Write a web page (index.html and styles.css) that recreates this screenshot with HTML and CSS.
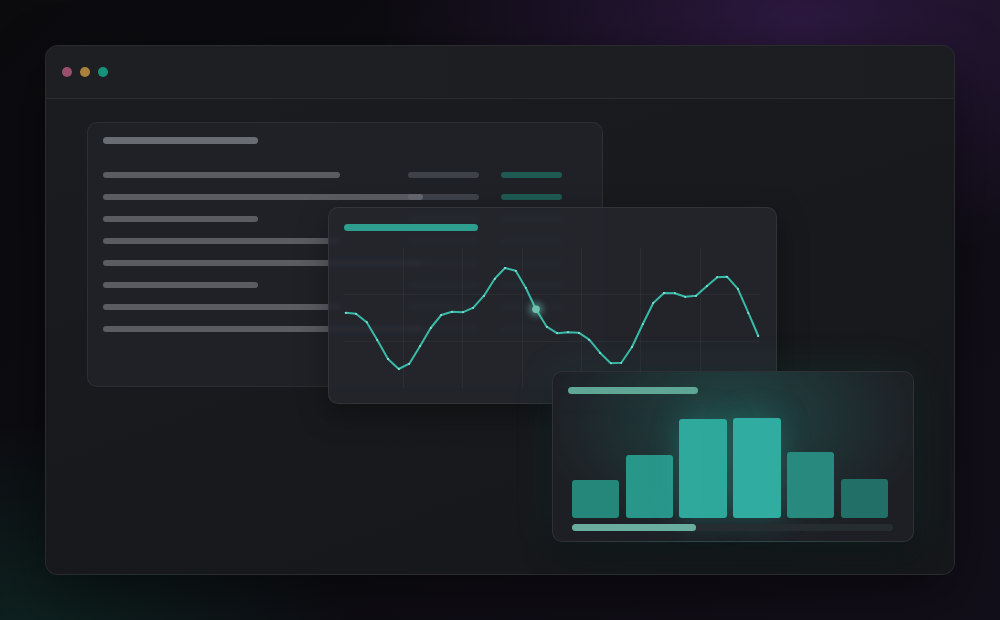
FILE: index.html
```html
<!DOCTYPE html>
<html lang="en">
<head>
<meta charset="utf-8">
<title>Dashboard preview</title>
<link rel="stylesheet" href="styles.css">
</head>
<body>
<div class="page">
  <div class="window">
    <div class="titlebar">
      <span class="dot dot-pink"></span>
      <span class="dot dot-yellow"></span>
      <span class="dot dot-green"></span>
    </div>
    <div class="content">
      <div class="card table-card">
        <div class="pill table-title"></div>
        <div class="rows">
          <div class="row"><span class="cell c1 w-a"></span><span class="cell c2"></span><span class="cell c3 teal"></span></div>
          <div class="row"><span class="cell c1 w-b"></span><span class="cell c2"></span><span class="cell c3 teal"></span></div>
          <div class="row"><span class="cell c1 w-c"></span><span class="cell c2"></span><span class="cell c3"></span></div>
          <div class="row"><span class="cell c1 w-a"></span><span class="cell c2"></span><span class="cell c3"></span></div>
          <div class="row"><span class="cell c1 w-b"></span><span class="cell c2"></span><span class="cell c3"></span></div>
          <div class="row"><span class="cell c1 w-c"></span><span class="cell c2"></span><span class="cell c3"></span></div>
          <div class="row"><span class="cell c1 w-a"></span><span class="cell c2"></span><span class="cell c3"></span></div>
          <div class="row"><span class="cell c1 w-b"></span><span class="cell c2"></span><span class="cell c3"></span></div>
        </div>
      </div>

      <div class="card chart-card">
        <div class="pill chart-title"></div>
        <svg class="chart" viewBox="344 244 417 150" width="417" height="150">
          <defs>
            <marker id="vtx" viewBox="0 0 4 4" refX="2" refY="2" markerWidth="2.4" markerHeight="2.4" markerUnits="userSpaceOnUse">
              <circle cx="2" cy="2" r="2" fill="#7fdccd"/>
            </marker>
            <filter id="glow" x="-3" y="-3" width="7" height="7">
              <feGaussianBlur stdDeviation="3"/>
            </filter>
          </defs>
          <g class="grid">
            <line x1="403.5" y1="248" x2="403.5" y2="388"/>
            <line x1="462.5" y1="248" x2="462.5" y2="388"/>
            <line x1="522.5" y1="248" x2="522.5" y2="388"/>
            <line x1="581.5" y1="248" x2="581.5" y2="388"/>
            <line x1="640.5" y1="248" x2="640.5" y2="388"/>
            <line x1="700.5" y1="248" x2="700.5" y2="388"/>
            <line x1="344" y1="294.5" x2="760" y2="294.5"/>
            <line x1="344" y1="341.5" x2="760" y2="341.5"/>
          </g>
          <polyline class="line" marker-start="url(#vtx)" marker-mid="url(#vtx)" marker-end="url(#vtx)"
            points="345.7,312.7 356,313.7 366.7,322.3 377.3,340 388,359 398.7,369 409.3,363.7 420,346.3 430.7,328 441.3,315 452,311.7 462.7,312.3 473.3,307.7 484,295.7 494.7,278.7 505,268 515.7,270.7 525.7,287.7 536,309.3 546.7,326.7 557.3,333.3 568,332.3 578.7,332.7 589.3,339.7 600,352.7 610.7,363.3 621.3,362.7 632,347 642.7,324.3 653.3,303 664,293 674.7,293.3 685.3,296.7 696,295.7 706.7,286.3 717.3,277.3 727,276.7 737.7,288.7 748.3,312.7 758.3,336"/>
          <circle cx="536" cy="309.3" r="7" fill="#6fd6c4" opacity="0.45" filter="url(#glow)"/>
          <circle cx="536" cy="309.3" r="3.8" fill="#6fc1b0"/>
        </svg>
      </div>

      <div class="card bars-card">
        <div class="pill bars-title"></div>
        <div class="bars">
          <span class="bar b1" style="height:38px"></span>
          <span class="bar b2" style="height:63px"></span>
          <span class="bar b3" style="height:99px"></span>
          <span class="bar b4" style="height:100px"></span>
          <span class="bar b5" style="height:66px"></span>
          <span class="bar b6" style="height:39px"></span>
        </div>
        <div class="scroll"><span class="thumb"></span></div>
      </div>
    </div>
  </div>
</div>
</body>
</html>
```

FILE: styles.css
```css
* { box-sizing: border-box; }

html, body {
  margin: 0;
  width: 1000px;
  height: 620px;
  overflow: hidden;
  font-family: "Inter", "Liberation Sans", sans-serif;
}

body {
  background:
    radial-gradient(ellipse 420px 250px at 800px 20px, rgba(70, 34, 100, 0.55), rgba(70, 34, 100, 0) 100%),
    radial-gradient(ellipse 320px 220px at 30px 640px, rgba(14, 62, 50, 0.45), rgba(14, 62, 50, 0) 100%),
    linear-gradient(135deg, #0b0b0e 0%, #0e0d13 55%, #130f1a 100%);
}

.page {
  padding: 45px;
}

.window {
  width: 910px;
  height: 530px;
  border: 1px solid rgba(255, 255, 255, 0.08);
  border-radius: 13px;
  background: #18191c;
  display: flex;
  flex-direction: column;
  overflow: hidden;
  box-shadow: 0 20px 60px rgba(0, 0, 0, 0.45);
}

.titlebar {
  height: 53px;
  flex: none;
  display: flex;
  align-items: center;
  gap: 8px;
  padding-left: 16px;
  background: linear-gradient(90deg, #1e1f22, #1d1e22 60%, #1c1d20);
  border-bottom: 1px solid #2b2c30;
}

.dot {
  width: 10px;
  height: 10px;
  border-radius: 50%;
}
.dot-pink { background: #9a4f6d; }
.dot-yellow { background: #a8813a; }
.dot-green { background: #14937a; }

.content {
  position: relative;
  flex: 1;
  background: linear-gradient(160deg, #1b1c1f 0%, #18191c 50%, #15171a 100%);
}

.card {
  position: absolute;
  border-radius: 10px;
  border: 1px solid rgba(255, 255, 255, 0.07);
  display: flex;
  flex-direction: column;
  align-items: flex-start;
}

.pill {
  height: 7px;
  border-radius: 4px;
  flex: none;
}

/* table card */
.table-card {
  left: 41px;
  top: 23px;
  width: 516px;
  height: 265px;
  padding: 14px 15px;
  background: #202126;
  border-color: rgba(255, 255, 255, 0.06);
}

.table-title {
  width: 155px;
  background: #696c73;
}

.rows {
  margin-top: 28px;
  display: flex;
  flex-direction: column;
  gap: 16px;
}

.row {
  display: grid;
  grid-template-columns: 305px 93px 61px;
  height: 6px;
}

.cell {
  display: block;
  height: 6px;
  border-radius: 3px;
}

.c1 { background: rgba(140, 142, 148, 0.55); }
.w-a { width: 237px; }
.w-b { width: 320px; }
.w-c { width: 155px; }

.c2 { width: 71px; background: rgba(120, 125, 138, 0.35); }
.c3 { width: 61px; background: rgba(120, 125, 138, 0.3); }
.c3.teal { background: #1f5a52; }

/* chart card */
.chart-card {
  left: 282px;
  top: 108px;
  width: 449px;
  height: 197px;
  padding: 16px 0 0 15px;
  background: rgba(36, 38, 44, 0.9);
  -webkit-backdrop-filter: blur(2px);
  backdrop-filter: blur(2px);
  box-shadow: 0 10px 30px rgba(0, 0, 0, 0.35);
}

.chart-title {
  width: 134px;
  background: #2e9e8e;
}

.chart {
  display: block;
  margin-top: 13px;
  overflow: visible;
}

.grid line {
  stroke: rgba(255, 255, 255, 0.04);
  stroke-width: 1;
}

.line {
  fill: none;
  stroke: #38bba8;
  stroke-width: 2;
  stroke-linejoin: round;
  stroke-linecap: round;
}

/* bars card */
.bars-card {
  left: 506px;
  top: 272px;
  width: 362px;
  height: 171px;
  padding: 15px 15px 0 15px;
  background:
    radial-gradient(ellipse 190px 130px at 50% 28%, rgba(40, 150, 135, 0.32), rgba(40, 150, 135, 0) 100%),
    rgba(30, 32, 37, 0.95);
  -webkit-backdrop-filter: blur(3px);
  backdrop-filter: blur(3px);
  border-color: rgba(255, 255, 255, 0.08);
  box-shadow: 0 0 40px rgba(40, 170, 150, 0.12), 0 12px 30px rgba(0, 0, 0, 0.4);
}

.bars-title {
  width: 130px;
  background: #5fa695;
}

.bars {
  margin-top: 24px;
  margin-left: 4px;
  width: 316px;
  height: 100px;
  display: flex;
  align-items: flex-end;
  gap: 6.4px;
}

.bar {
  flex: 1;
  border-radius: 3px;
  display: block;
}
.b1 { background: #25877a; }
.b2 { background: #29968a; }
.b3 { background: #2ea99b; box-shadow: 0 0 30px rgba(46, 169, 155, 0.3); }
.b4 { background: #30ada0; box-shadow: 0 0 30px rgba(46, 169, 155, 0.3); }
.b5 { background: #288a7f; }
.b6 { background: #216f66; }

.scroll {
  margin-top: 6px;
  margin-left: 4px;
  width: 321px;
  height: 7px;
  border-radius: 4px;
  background: #262d31;
  display: flex;
}

.thumb {
  width: 124px;
  height: 7px;
  border-radius: 4px;
  background: #69ae9e;
}
```
